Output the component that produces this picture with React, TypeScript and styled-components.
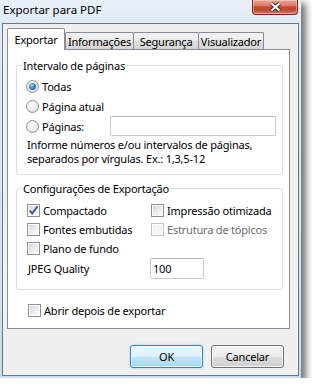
import React from 'react'
import styled, { createGlobalStyle } from 'styled-components'

const GlobalStyle = createGlobalStyle`
  html, body {
    margin: 0;
    padding: 0;
    background: #fff;
  }
  body {
    font-family: "Segoe UI", "Noto Sans", sans-serif;
    font-size: 11px;
    letter-spacing: -0.2px;
    color: #000;
  }
  * {
    box-sizing: border-box;
  }
`

export default function App() {
  return (
    <>
      <GlobalStyle />
      <Window>
        <TitleBar>
          <Title>Exportar para PDF</Title>
          <CloseButton>
            <svg width="13" height="10" viewBox="0 0 13 10">
              <path d="M2.5 1.5 L10.5 8.5 M10.5 1.5 L2.5 8.5" stroke="#4b2a26" strokeWidth="4" />
              <path d="M2.5 1.5 L10.5 8.5 M10.5 1.5 L2.5 8.5" stroke="#fff" strokeWidth="2" />
            </svg>
          </CloseButton>
        </TitleBar>

        <Client>
          <TabStrip>
            <Tab $active $width={58}>Exportar</Tab>
            <Tab $width={69}>Informações</Tab>
            <Tab $width={66} $overlap>Segurança</Tab>
            <Tab $width={66} $overlap>Visualizador</Tab>
          </TabStrip>

          <Panel>
            <Group>
              <Legend>Intervalo de páginas</Legend>
              <RangeBody>
                <OptionRow>
                  <Radio $checked />
                  <span>Todas</span>
                </OptionRow>
                <OptionRow>
                  <Radio />
                  <span>Página atual</span>
                </OptionRow>
                <OptionRow>
                  <PagesLabel>
                    <Radio />
                    <span>Páginas:</span>
                  </PagesLabel>
                  <TextBox $width={166} $height={20} />
                </OptionRow>
                <Hint>
                  Informe números e/ou intervalos de páginas,
                  <br />
                  separados por vírgulas. Ex.: 1,3,5-12
                </Hint>
              </RangeBody>
            </Group>

            <Group $spaced>
              <Legend>Configurações de Exportação</Legend>
              <SettingsGrid>
                <OptionRow>
                  <CheckBox checked />
                  <span>Compactado</span>
                </OptionRow>
                <OptionRow>
                  <CheckBox />
                  <span>Impressão otimizada</span>
                </OptionRow>
                <OptionRow>
                  <CheckBox />
                  <span>Fontes embutidas</span>
                </OptionRow>
                <OptionRow $disabled>
                  <CheckBox disabled />
                  <span>Estrutura de tópicos</span>
                </OptionRow>
                <OptionRow>
                  <CheckBox />
                  <span>Plano de fundo</span>
                </OptionRow>
                <div />
                <QualityLabel>JPEG Quality</QualityLabel>
                <TextBox $width={54} $height={21} $shift>100</TextBox>
              </SettingsGrid>
            </Group>

            <OpenRow>
              <CheckBox />
              <span>Abrir depois de exportar</span>
            </OpenRow>
          </Panel>

          <ButtonRow>
            <Button $default>OK</Button>
            <Button>Cancelar</Button>
          </ButtonRow>
        </Client>
      </Window>
    </>
  )
}

function CheckBox({ checked, disabled }: { checked?: boolean; disabled?: boolean }) {
  return (
    <Box $disabled={disabled}>
      {checked && (
        <svg width="11" height="11" viewBox="0 0 11 11">
          <path d="M1.8 5.6 L4.2 8.4 L9.6 1.2" fill="none" stroke="#3c5a8f" strokeWidth="1.9" />
        </svg>
      )}
    </Box>
  )
}

const Window = styled.div`
  width: 301px;
  height: 378px;
  display: flex;
  flex-direction: column;
  padding: 0 2px 2px 2px;
  background: linear-gradient(180deg, #e9f0f8 0px, #e1eaf5 23px, #cadcef 100%);
  box-shadow: 4px 4px 7px 1px rgba(0, 0, 0, 0.55);
`

const TitleBar = styled.div`
  height: 23px;
  flex-shrink: 0;
  display: flex;
  align-items: flex-start;
  justify-content: space-between;
  padding: 0 1px 0 1px;
`

const Title = styled.div`
  margin-top: 2px;
  line-height: 16px;
  font-size: 11.5px;
  letter-spacing: 0;
  color: #000;
`

const CloseButton = styled.div`
  width: 46px;
  height: 15px;
  display: flex;
  align-items: center;
  justify-content: center;
  border: 1px solid #7a2a1e;
  border-top: none;
  border-radius: 0 0 4px 4px;
  background: linear-gradient(180deg, #e8a89a 0%, #d87a66 40%, #c4432d 52%, #c64a33 75%, #da836f 100%);
  box-shadow: inset 0 0 0 1px rgba(255, 220, 210, 0.45);
`

const Client = styled.div`
  flex: 1;
  display: flex;
  flex-direction: column;
  border: 1px solid #6b7887;
  background: #f0f0f0;
  padding: 4px 8px 0 4px;
`

const TabStrip = styled.div`
  height: 21px;
  display: flex;
  align-items: flex-end;
`

const Tab = styled.div<{ $active?: boolean; $width: number; $overlap?: boolean }>`
  position: relative;
  z-index: ${({ $active }) => ($active ? 1 : 0)};
  width: ${({ $width }) => $width}px;
  height: ${({ $active }) => ($active ? 22 : 17)}px;
  margin-bottom: ${({ $active }) => ($active ? -1 : 0)}px;
  margin-left: ${({ $overlap }) => ($overlap ? -1 : 0)}px;
  display: flex;
  align-items: center;
  justify-content: center;
  padding-top: ${({ $active }) => ($active ? 0 : 1)}px;
  border: 1px solid #898c95;
  border-bottom: none;
  border-radius: 2px 2px 0 0;
  background: ${({ $active }) =>
    $active ? '#fff' : 'linear-gradient(180deg, #f3f3f3 0%, #ebebeb 50%, #dedede 51%, #d6d6d6 100%)'};
  white-space: nowrap;
`

const Panel = styled.div`
  height: 280px;
  flex-shrink: 0;
  border: 1px solid #898c95;
  background: #fff;
  padding: 8px 6px 0 8px;
  display: flex;
  flex-direction: column;
`

const Group = styled.fieldset<{ $spaced?: boolean }>`
  margin: ${({ $spaced }) => ($spaced ? 6 : 0)}px 0 0 0;
  padding: 0;
  min-width: 0;
  border: 1px solid #d5dfe5;
  border-radius: 3px;
`

const Legend = styled.legend`
  margin-left: 5px;
  padding: 0 1px;
  line-height: 15px;
`

const RangeBody = styled.div`
  padding: 3px 0 8px 10px;
  display: flex;
  flex-direction: column;
`

const OptionRow = styled.div<{ $disabled?: boolean }>`
  height: 20px;
  display: flex;
  align-items: center;
  gap: 3px;
  color: ${({ $disabled }) => ($disabled ? '#6d6d6d' : '#000')};
  white-space: nowrap;
`

const PagesLabel = styled.div`
  width: 80px;
  display: flex;
  align-items: center;
  gap: 3px;
`

const Radio = styled.span<{ $checked?: boolean }>`
  width: 13px;
  height: 13px;
  flex-shrink: 0;
  margin-left: -1px;
  border-radius: 50%;
  border: 1px solid #8e8f8f;
  background: radial-gradient(circle at 40% 35%, #ffffff 0%, #ececec 55%, #d2d2d2 100%);
  display: flex;
  align-items: center;
  justify-content: center;

  &::after {
    content: '';
    display: ${({ $checked }) => ($checked ? 'block' : 'none')};
    width: 7px;
    height: 7px;
    border-radius: 50%;
    background: radial-gradient(circle at 40% 35%, #b5dcf7 0%, #3f8bd0 40%, #0c4c8f 100%);
  }
`

const Box = styled.span<{ $disabled?: boolean }>`
  width: 13px;
  height: 13px;
  flex-shrink: 0;
  display: flex;
  align-items: center;
  justify-content: center;
  border: 1px solid ${({ $disabled }) => ($disabled ? '#c3c3c3' : '#8e8f8f')};
  background: ${({ $disabled }) =>
    $disabled ? '#f4f4f4' : 'linear-gradient(135deg, #cfd2d6 0%, #eceded 55%, #fbfbfb 100%)'};
  box-shadow: inset 0 0 0 1px #fff;
`

const TextBox = styled.div<{ $width: number; $height: number; $shift?: boolean }>`
  width: ${({ $width }) => $width}px;
  height: ${({ $height }) => $height}px;
  margin-left: ${({ $shift }) => ($shift ? -1 : 0)}px;
  border: 1px solid #c6cad1;
  border-top-color: #b3b7be;
  border-radius: 2px;
  background: #fff;
  display: flex;
  align-items: center;
  padding-left: 2px;
`

const Hint = styled.div`
  margin-top: 2px;
  line-height: 14px;
`

const SettingsGrid = styled.div`
  padding: 5px 0 10px 10px;
  display: grid;
  grid-template-columns: 124px 1fr;
  grid-template-rows: 19px 19px 19px 21px;
  align-items: center;
`

const QualityLabel = styled.div`
  padding-left: 1px;
`

const OpenRow = styled.div`
  margin-top: 10px;
  height: 20px;
  padding-left: 12px;
  display: flex;
  align-items: center;
  gap: 3px;
`

const ButtonRow = styled.div`
  margin-top: 16px;
  padding-right: 6px;
  display: flex;
  justify-content: flex-end;
  gap: 8px;
`

const Button = styled.div<{ $default?: boolean }>`
  width: 73px;
  height: 23px;
  display: flex;
  align-items: center;
  justify-content: center;
  border: 1px solid ${({ $default }) => ($default ? '#3c7fb1' : '#707070')};
  border-radius: 3px;
  background: ${({ $default }) =>
    $default
      ? 'linear-gradient(180deg, #eaf6fd 0%, #d9f0fc 50%, #bee6fd 51%, #a7d9f5 100%)'
      : 'linear-gradient(180deg, #f2f2f2 0%, #ebebeb 50%, #dddddd 51%, #cfcfcf 100%)'};
  box-shadow: ${({ $default }) =>
    $default ? 'inset 0 0 0 1px rgba(255,255,255,0.7), 0 0 2px #7fc4ee' : 'inset 0 0 0 1px rgba(255,255,255,0.8)'};
`
